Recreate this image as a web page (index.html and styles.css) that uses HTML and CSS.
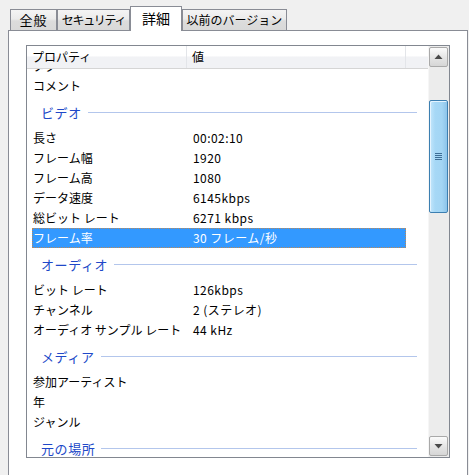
FILE: index.html
```html
<!DOCTYPE html>
<html lang="ja">
<head>
<meta charset="utf-8">
<link rel="stylesheet" href="styles.css">
</head>
<body>
<div class="tabs">
  <div class="tab t1">全般</div>
  <div class="tab t2">セキュリティ</div>
  <div class="tab t3 active">詳細</div>
  <div class="tab t4">以前のバージョン</div>
</div>
<div class="panel">
  <div class="list">
    <div class="content">
      <div class="header">
        <div class="hcell h1">プロパティ</div>
        <div class="hcell h2">値</div>
        <div class="hcell h3"></div>
      </div>
      <div class="rows">
        <div class="row first"><span class="k">タグ</span><span class="v"></span></div>
        <div class="row"><span class="k">コメント</span><span class="v"></span></div>
        <div class="group"><span class="gt">ビデオ</span><span class="gl"></span></div>
        <div class="row"><span class="k">長さ</span><span class="v">00:02:10</span></div>
        <div class="row"><span class="k">フレーム幅</span><span class="v">1920</span></div>
        <div class="row"><span class="k">フレーム高</span><span class="v">1080</span></div>
        <div class="row"><span class="k">データ速度</span><span class="v">6145kbps</span></div>
        <div class="row"><span class="k">総ビット レート</span><span class="v">6271 kbps</span></div>
        <div class="row sel"><span class="k">フレーム率</span><span class="v">30 フレーム/秒</span></div>
        <div class="group"><span class="gt">オーディオ</span><span class="gl"></span></div>
        <div class="row"><span class="k">ビット レート</span><span class="v">126kbps</span></div>
        <div class="row"><span class="k">チャンネル</span><span class="v">2 (ステレオ)</span></div>
        <div class="row"><span class="k">オーディオ サンプル レート</span><span class="v">44 kHz</span></div>
        <div class="group"><span class="gt">メディア</span><span class="gl"></span></div>
        <div class="row"><span class="k">参加アーティスト</span><span class="v"></span></div>
        <div class="row"><span class="k">年</span><span class="v"></span></div>
        <div class="row"><span class="k">ジャンル</span><span class="v"></span></div>
        <div class="group"><span class="gt">元の場所</span><span class="gl"></span></div>
      </div>
    </div>
    <div class="scrollbar">
      <div class="sbtn up"><svg width="9" height="6" viewBox="0 0 9 6"><polygon points="4.5,0.5 8.5,5 0.5,5" fill="#4a4a4a"/></svg></div>
      <div class="track">
        <div class="thumb">
          <svg width="8" height="9" viewBox="0 0 8 9" class="grip"><g stroke="#3d6e96" stroke-width="1"><line x1="0" y1="1.5" x2="7" y2="1.5"/><line x1="0" y1="3.5" x2="7" y2="3.5"/><line x1="0" y1="5.5" x2="7" y2="5.5"/><line x1="0" y1="7.5" x2="7" y2="7.5"/></g></svg>
        </div>
      </div>
      <div class="sbtn down"><svg width="9" height="6" viewBox="0 0 9 6"><polygon points="0.5,1 8.5,1 4.5,5.5" fill="#4a4a4a"/></svg></div>
    </div>
  </div>
</div>
</body>
</html>
```

FILE: styles.css
```css
* { box-sizing: border-box; }
html, body { margin: 0; padding: 0; }
body {
  background: #f0f0f0;
  font-family: "Noto Sans CJK JP", "Noto Sans", sans-serif;
  font-size: 12px;
  color: #000;
  width: 469px;
  height: 475px;
  overflow: hidden;
}
.tabs {
  display: flex;
  align-items: flex-end;
  height: 30px;
  padding-left: 10px;
}
.tab {
  height: 21px;
  border: 1px solid #898c95;
  border-bottom: none;
  background: linear-gradient(#f4f4f4 0%, #ebebeb 45%, #dcdcdc 55%, #d9d9d9 100%);
  font-size: 12px;
  line-height: 19px;
  text-align: center;
  white-space: nowrap;
  overflow: hidden;
}
.t1 { width: 47px; font-size: 13px; letter-spacing: 1px; }
.t2 { width: 73px; letter-spacing: -1.3px; }
.t3 { width: 52px; }
.t4 { width: 105px; }
.tab.active {
  position: relative;
  z-index: 2;
  height: 25px;
  margin-bottom: -1px;
  background: #fff;
  font-size: 14px;
  line-height: 22px;
}
.panel {
  margin-left: 8px;
  width: 460px;
  height: 460px;
  border: 1px solid #898c95;
  background: #fff;
  padding: 14px 0 0 17px;
}
.list {
  width: 424px;
  height: 413px;
  border: 1px solid #828790;
  display: flex;
}
.content {
  flex: 1;
  display: flex;
  flex-direction: column;
  overflow: hidden;
}
.header {
  display: flex;
  height: 23px;
  border-bottom: 1px solid #d5d5d5;
  background: linear-gradient(#ffffff 0%, #ffffff 45%, #f1f2f5 50%, #f1f2f5 100%);
  flex-shrink: 0;
  position: relative;
  z-index: 1;
}
.hcell {
  line-height: 22px;
  white-space: nowrap;
}
.h1 { width: 160px; padding-left: 5px; border-right: 1px solid #e3e5e9; }
.h2 { width: 219px; padding-left: 5px; border-right: 1px solid #e3e5e9; }
.h3 { flex: 1; }
.rows {
  flex: 1;
  overflow: hidden;
}
.row {
  display: grid;
  grid-template-columns: 161px 1fr;
  height: 20px;
  line-height: 20px;
  margin-left: 5px;
  width: 374px;
  white-space: nowrap;
}
.row.first { margin-top: -13px; }
.k { padding-left: 1px; }
.v { letter-spacing: 0.45px; }
.row.sel {
  background: #3399ff;
  color: #fff;
  border: 1px dotted #b9885a;
  line-height: 18px;
}
.row.sel .k { padding-left: 0; }
.row.sel .v { margin-left: -1px; }
.group {
  display: flex;
  align-items: center;
  height: 32px;
  margin-left: 5px;
  width: 385px;
  padding-left: 9px;
}
.gt {
  color: #2048c8;
  font-size: 13px;
  letter-spacing: 0.6px;
  white-space: nowrap;
}
.gl {
  flex: 1;
  height: 1px;
  margin-left: 6px;
  background: #b3c6ec;
}
.scrollbar {
  width: 21px;
  display: flex;
  flex-direction: column;
  background: #ececec;
  border-left: 1px solid #f6f6f6;
  padding: 1px 1px 1px 0;
}
.sbtn {
  height: 20px;
  border: 1px solid #a9a9a9;
  border-radius: 2px;
  background: linear-gradient(#fbfbfb, #e6e6e6 50%, #d6d6d6);
  display: flex;
  align-items: center;
  justify-content: center;
  flex-shrink: 0;
}
.track {
  flex: 1;
}
.thumb {
  margin-top: 33px;
  height: 113px;
  border: 1px solid #3c7fb1;
  border-radius: 2px;
  background: linear-gradient(90deg, #c4e6fb 0%, #a6d8f6 30%, #a3d5f4 70%, #8dc4ea 100%);
  box-shadow: inset 1px 1px 0 #e4f4ff;
  display: flex;
  align-items: center;
  justify-content: center;
}
```
